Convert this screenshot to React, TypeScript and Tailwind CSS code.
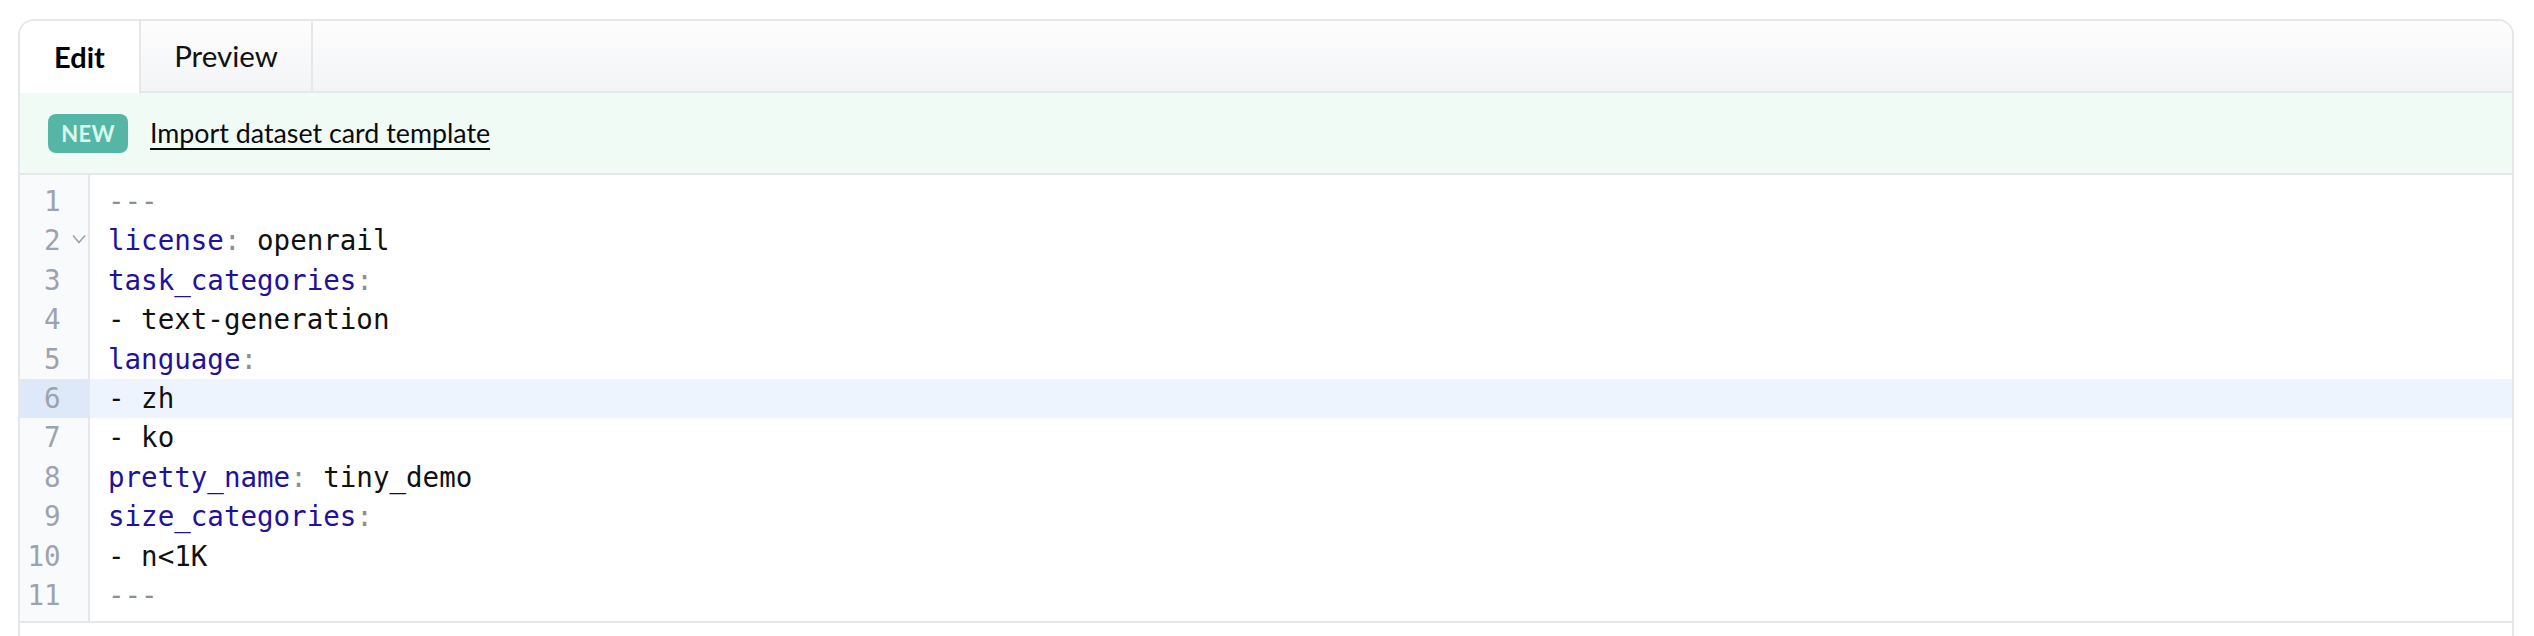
import React from 'react';

type Tok = { t: string; c: 'key' | 'punct' | 'val' };

const lines: Tok[][] = [
  [{ t: '---', c: 'punct' }],
  [{ t: 'license', c: 'key' }, { t: ':', c: 'punct' }, { t: ' openrail', c: 'val' }],
  [{ t: 'task_categories', c: 'key' }, { t: ':', c: 'punct' }],
  [{ t: '- text-generation', c: 'val' }],
  [{ t: 'language', c: 'key' }, { t: ':', c: 'punct' }],
  [{ t: '- zh', c: 'val' }],
  [{ t: '- ko', c: 'val' }],
  [{ t: 'pretty_name', c: 'key' }, { t: ':', c: 'punct' }, { t: ' tiny_demo', c: 'val' }],
  [{ t: 'size_categories', c: 'key' }, { t: ':', c: 'punct' }],
  [{ t: '- n<1K', c: 'val' }],
  [{ t: '---', c: 'punct' }],
];

const tokClass = {
  key: 'text-[#221199]',
  punct: 'text-[#8b8f97]',
  val: 'text-[#111111]',
};

const activeLine = 6;

function FoldChevron() {
  return (
    <svg width="14" height="10" viewBox="0 0 14 10" className="mt-[13px]">
      <polyline points="1,1.5 7,8.5 13,1.5" fill="none" stroke="#9ca3af" strokeWidth="1.6" />
    </svg>
  );
}

export default function App() {
  const sans = { fontFamily: 'Lato, "Noto Sans", sans-serif' };
  return (
    <div className="min-h-screen bg-white pt-[19px] pl-[18px] pr-[20px]" style={sans}>
      <div className="rounded-t-2xl border-2 border-[#e5e7eb] overflow-hidden">
        {/* tabs */}
        <div className="flex bg-gradient-to-b from-[#fdfdfd] to-[#f3f4f6]">
          <div className="h-[72px] w-[121px] bg-white border-r-2 border-[#e5e7eb] flex items-center justify-center text-[29px] font-bold text-black">
            Edit
          </div>
          <div className="h-[72px] w-[172px] border-r-2 border-b-2 border-[#e5e7eb] flex items-center justify-center text-[29.5px] text-[#111]">
            Preview
          </div>
          <div className="flex-1 h-[72px] border-b-2 border-[#e5e7eb]" />
        </div>

        {/* banner */}
        <div className="h-[82px] bg-[#f0fbf6] border-b-2 border-[#e5e7eb] flex items-center gap-[22px] pl-[28px]">
          <span className="h-[39px] w-[80px] rounded-[8px] bg-[#56b6a6] text-[#d6faec] font-bold text-[22px] tracking-[0.3px] flex items-center justify-center">
            NEW
          </span>
          <a href="#" className="text-[26.8px] text-[#0b0b0b] underline underline-offset-[5px] decoration-[2px]">
            Import dataset card template
          </a>
        </div>

        {/* code editor */}
        <div
          className="flex border-b-2 border-[#e5e7eb] text-[27.5px] leading-[39.4px]"
          style={{ fontFamily: '"DejaVu Sans Mono", "Liberation Mono", monospace' }}
        >
          <div className="w-[70px] bg-[#f9fafb] border-r-2 border-[#e5e7eb] pt-[7px] pb-[6px] shrink-0">
            {lines.map((_, i) => (
              <div
                key={i}
                className={`flex h-[39.4px] ${i + 1 === activeLine ? 'bg-[#dde8f8]' : ''}`}
              >
                <span className="w-[42px] text-right text-[#9ca3af]">{i + 1}</span>
                <span className="w-[28px] pl-[11px]">{i === 1 ? <FoldChevron /> : null}</span>
              </div>
            ))}
          </div>
          <div className="flex-1 pt-[7px] pb-[6px]">
            {lines.map((toks, i) => (
              <div
                key={i}
                className={`h-[39.4px] pl-[18px] whitespace-pre ${i + 1 === activeLine ? 'bg-[#eef4fd]' : ''}`}
              >
                {toks.map((tk, j) => (
                  <span key={j} className={tokClass[tk.c]}>
                    {tk.t}
                  </span>
                ))}
              </div>
            ))}
          </div>
        </div>
        <div className="h-[60px] bg-white" />
      </div>
    </div>
  );
}
